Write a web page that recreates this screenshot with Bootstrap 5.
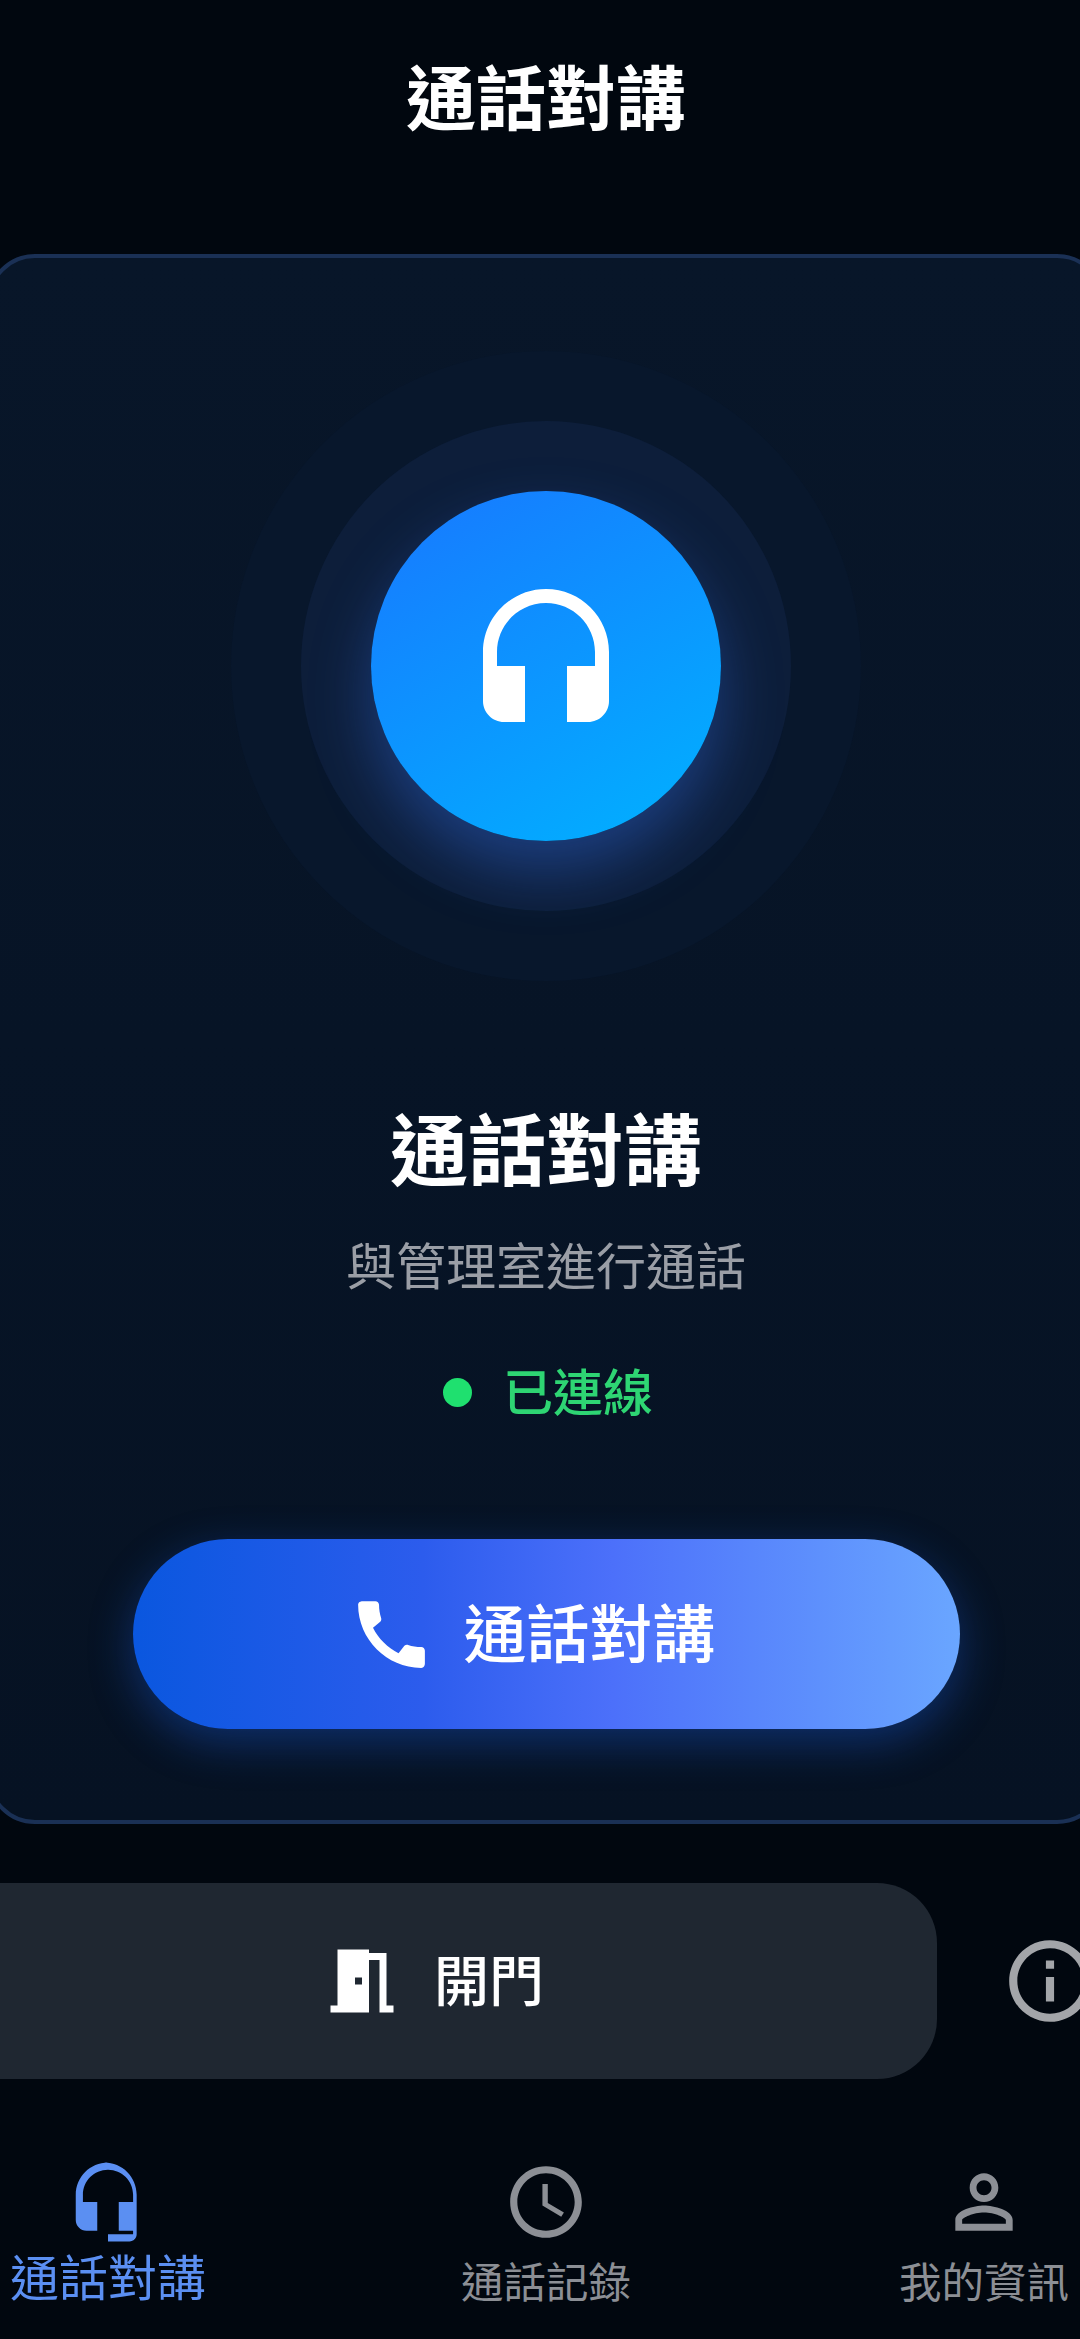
<!DOCTYPE html>
<html lang="zh-Hant">
<head>
    <meta charset="UTF-8">
    <meta name="viewport" content="width=device-width, initial-scale=1.0">
    <title>通話對講</title>
    <link href="https://cdn.jsdelivr.net/npm/bootstrap@5.3.0/dist/css/bootstrap.min.css" rel="stylesheet">
    <style>
        html, body { height: 100%; }
        body {
            width: 1080px;
            overflow: hidden;
            background: #01070f;
            color: #fff;
            font-family: "Noto Sans CJK TC", "Liberation Sans", sans-serif;
        }
        /* the app draws a bit wider than the window, so everything centres on x=546 */
        .app-frame { width: 1184px; margin-left: -46px; height: 2339px; }
        .page-title { height: 254px; padding-top: 52px; font-size: 70px; line-height: 86px; font-weight: 700; margin: 0; }
        .call-card {
            width: 1118px;
            height: 1570px;
            margin: 0 auto;
            padding-top: 93px;
            background: linear-gradient(180deg, #081629 0%, #061223 100%);
            border: 4px solid #1a3055;
            border-radius: 48px;
        }
        .call-card > * { flex-shrink: 0; }
        .ring-outer, .ring-mid, .ring-core { border-radius: 50%; }
        .ring-outer { width: 630px; height: 630px; background: #08172c; }
        .ring-mid { width: 490px; height: 490px; background: #0d1e3a; }
        .ring-core {
            width: 350px; height: 350px;
            background: linear-gradient(150deg, #1878ff 0%, #00b2ff 100%);
            box-shadow: 0 30px 60px rgba(50, 110, 230, .4);
        }
        .ring-core svg { width: 168px; height: 168px; fill: #fff; }
        .card-heading { margin: 109px 0 0; font-size: 78px; line-height: 112px; font-weight: 700; }
        .card-sub { margin: 25px 0 0; font-size: 50px; line-height: 72px; color: #9a9ea6; }
        .status-row { margin-top: 57px; padding-left: 4px; gap: 31px; height: 72px; font-size: 50px; font-weight: 500; color: #2ed573; }
        .status-text { padding-bottom: 5px; }
        .status-dot { width: 29px; height: 29px; border-radius: 50%; background: #1fe06f; }
        .call-btn {
            width: 827px; height: 190px;
            margin-top: 111px;
            padding: 0 30px 0 0;
            gap: 28px;
            border: 0;
            border-radius: 95px;
            color: #fff;
            font-size: 63px;
            font-weight: 500;
            background: linear-gradient(90deg, #0a57df 0%, #2c5ced 35%, #4c70fa 58%, #6aa6ff 100%);
            box-shadow: 0 14px 44px rgba(30, 100, 240, .35);
        }
        .call-btn svg { width: 89px; height: 89px; fill: #fff; }
        .btn-label { padding-bottom: 8px; }
        .door-row { margin-top: 59px; height: 196px; }
        .door-btn {
            width: 1000px; height: 196px;
            margin-left: -17px;
            padding: 0 10px 0 0;
            gap: 30px;
            border: 0;
            border-radius: 60px;
            background: #1f2731;
            color: #fff;
            font-size: 55px;
            font-weight: 500;
        }
        .door-btn svg { width: 84px; height: 84px; fill: #fff; }
        .info-btn { margin-left: 64px; }
        .info-btn svg { width: 98px; height: 98px; fill: #a3a5a9; display: block; }
        .tab-strip { width: 1314px; margin-left: -65px; margin-top: 80px; }
        .tab-item { flex: 1 1 0; color: #8c8f95; font-size: 42.5px; line-height: 56px; }
        .tab-item span { margin-top: 7px; }
        .tab-item svg { width: 86px; height: 86px; fill: #8c8f95; display: block; }
        .tab-item.is-active { color: #5b8ff2; font-size: 49px; }
        .tab-item.is-active span { margin-top: 2px; }
        .tab-item.is-active svg { fill: #5b8ff2; }
    </style>
</head>
<body>
<div class="app-frame">
    <h1 class="page-title text-center">通話對講</h1>

    <section class="call-card d-flex flex-column align-items-center text-center">
        <div class="ring-outer d-flex align-items-center justify-content-center">
            <div class="ring-mid d-flex align-items-center justify-content-center">
                <div class="ring-core d-flex align-items-center justify-content-center">
                    <svg viewBox="0 0 24 24"><path d="M12 1c-4.97 0-9 4.03-9 9v7c0 1.66 1.34 3 3 3h3v-8H5v-2c0-3.87 3.13-7 7-7s7 3.13 7 7v2h-4v8h3c1.66 0 3-1.34 3-3v-7c0-4.97-4.03-9-9-9z"/></svg>
                </div>
            </div>
        </div>
        <h2 class="card-heading">通話對講</h2>
        <p class="card-sub">與管理室進行通話</p>
        <div class="status-row d-flex align-items-center justify-content-center">
            <span class="status-dot"></span>
            <span class="status-text">已連線</span>
        </div>
        <button type="button" class="call-btn btn d-flex align-items-center justify-content-center">
            <svg viewBox="0 0 24 24"><path d="M20.01 15.38c-1.23 0-2.42-.2-3.53-.56-.35-.12-.74-.03-1.01.24l-1.57 1.97c-2.83-1.35-5.48-3.9-6.89-6.83l1.95-1.66c.27-.28.35-.67.24-1.02-.37-1.11-.56-2.3-.56-3.53 0-.54-.45-.99-.99-.99H4.19C3.65 3 3 3.24 3 3.99 3 13.28 10.73 21 20.01 21c.71 0 .99-.63.99-1.18v-3.45c0-.54-.45-.99-.99-.99z"/></svg>
            <span class="btn-label">通話對講</span>
        </button>
    </section>

    <div class="door-row d-flex align-items-center">
        <button type="button" class="door-btn btn d-flex align-items-center justify-content-center">
            <svg viewBox="0 0 24 24"><path d="M14 6v15H3v-2h2V3h9v1h5v15h2v2h-4V6h-3zm-4 5v2h2v-2h-2z"/></svg>
            <span class="btn-label">開門</span>
        </button>
        <div class="info-btn">
            <svg viewBox="0 0 24 24"><path d="M11 7h2v2h-2zm0 4h2v6h-2zm1-9C6.48 2 2 6.48 2 12s4.48 10 10 10 10-4.48 10-10S17.52 2 12 2zm0 18c-4.41 0-8-3.59-8-8s3.59-8 8-8 8 3.59 8 8-3.59 8-8 8z"/></svg>
        </div>
    </div>

    <nav class="tab-strip d-flex text-center">
        <div class="tab-item is-active d-flex flex-column align-items-center">
            <svg viewBox="0 0 24 24"><path d="M12 1c-4.97 0-9 4.03-9 9v7c0 1.66 1.34 3 3 3h3v-8H5v-2c0-3.87 3.13-7 7-7s7 3.13 7 7v2h-4v8h4v1h-7v2h6c1.1 0 2-.9 2-2V10c0-4.97-4.03-9-9-9z"/></svg>
            <span>通話對講</span>
        </div>
        <div class="tab-item d-flex flex-column align-items-center">
            <svg viewBox="0 0 24 24"><path d="M11.99 2C6.47 2 2 6.48 2 12s4.47 10 9.99 10C17.52 22 22 17.52 22 12S17.52 2 11.99 2zM12 20c-4.42 0-8-3.58-8-8s3.58-8 8-8 8 3.58 8 8-3.58 8-8 8zm.5-13H11v6l5.25 3.15.75-1.23-4.5-2.67z"/></svg>
            <span>通話記錄</span>
        </div>
        <div class="tab-item d-flex flex-column align-items-center">
            <svg viewBox="0 0 24 24"><path d="M12 5.9c1.16 0 2.1.94 2.1 2.1s-.94 2.1-2.1 2.1S9.9 9.16 9.9 8s.94-2.1 2.1-2.1m0 9c2.97 0 6.1 1.46 6.1 2.1v1.1H5.9V17c0-.64 3.13-2.1 6.1-2.1M12 4C9.79 4 8 5.79 8 8s1.79 4 4 4 4-1.79 4-4-1.79-4-4-4zm0 9c-2.67 0-8 1.34-8 4v3h16v-3c0-2.66-5.33-4-8-4z"/></svg>
            <span>我的資訊</span>
        </div>
    </nav>
</div>

<script src="https://cdn.jsdelivr.net/npm/bootstrap@5.3.0/dist/js/bootstrap.bundle.min.js"></script>
</body>
</html>
